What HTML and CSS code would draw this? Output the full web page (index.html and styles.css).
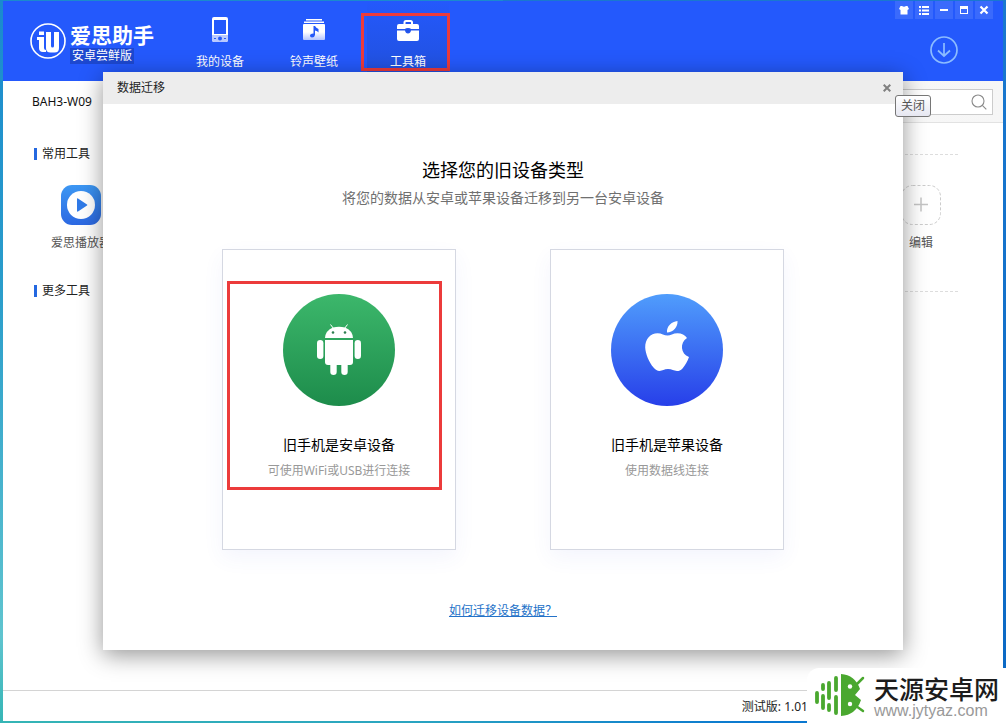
FILE: index.html
```html
<!DOCTYPE html>
<html lang="zh-CN">
<head>
<meta charset="utf-8">
<title>爱思助手 安卓尝鲜版</title>
<link rel="stylesheet" href="styles.css">
</head>
<body>
<div class="app">
  <header class="topbar">
    <div class="brand">
      <svg class="brand-mark" viewBox="0 0 36 36" aria-hidden="true">
        <circle cx="18" cy="18" r="17" fill="none" stroke="#fff" stroke-width="1.6"/>
        <path fill="#fff" d="M9 8.500h5v3.500H9zM7 14h7v11q0 2 2 2v2h-3q-4 0-4-4v-8H7zM16 9h5v14q0 1.500 1.500 1.500T24 23V9h5v16q0 4.500-4.500 4.500h-4Q16 29.500 16 25z"/>
      </svg>
      <div class="brand-text">
        <div class="brand-name">爱思助手</div>
        <div class="brand-edition">安卓尝鲜版</div>
      </div>
    </div>
    <nav class="nav">
      <a class="nav-item" href="#device">
        <svg class="nav-icon" viewBox="0 0 26 28" aria-hidden="true">
          <path fill="#fff" fill-rule="evenodd" d="M7 2h12q2 0 2 2v21q0 2-2 2H7q-2 0-2-2V4q0-2 2-2zm0 3v14h12V5z"/>
          <path fill="#b9c9ff" d="M5 20h16v5q0 2-2 2H7q-2 0-2-2z"/>
          <circle cx="13" cy="23.500" r="2" fill="#2459f8"/>
          <path stroke="#2459f8" d="M7 23.500h2M17 23.500h2"/>
        </svg>
        <span>我的设备</span>
      </a>
      <a class="nav-item" href="#media">
        <svg class="nav-icon" viewBox="0 0 26 28" aria-hidden="true">
          <defs><linearGradient id="album" x2="0" y2="1"><stop stop-color="#fff"/><stop offset=".5" stop-color="#fff"/><stop offset="1" stop-color="#b3c5ff"/></linearGradient></defs>
          <path stroke="#fff" stroke-width="1.400" d="M5 4.700h16M3 7.300h20"/>
          <rect x="2" y="9" width="22" height="16" rx="1" fill="url(#album)"/>
          <path fill="#2459f8" d="M12.500 11h1.500q1 2 3.500 3v3.500q-1-1.500-3.500-2V20q-.5 2.500-3 2.500-2 0-2-1.800 0-2 3.500-2.200z"/>
        </svg>
        <span>铃声壁纸</span>
      </a>
      <a class="nav-item nav-item-active" href="#toolbox">
        <svg class="nav-icon" viewBox="0 0 26 28" aria-hidden="true">
          <path fill="none" stroke="#fff" stroke-width="2" d="M9.500 10V7.500Q9.500 6 11 6h4.500q1.500 0 1.500 1.500V10"/>
          <path fill="#fff" d="M4 9h18q2 0 2 2v3h-8q-.5-1-3-1t-3 1H2v-3q0-2 2-2zM2 15.500h8q.5 3 3 3t3-3h8V24q0 2-2 2H4q-2 0-2-2z"/>
          <circle cx="13" cy="15.500" r="1.500" fill="#2153e6"/>
        </svg>
        <span>工具箱</span>
        <span class="mark mark-nav"></span>
      </a>
    </nav>
    <div class="top-actions">
      <div class="window-buttons">
        <button type="button" class="window-button" aria-label="皮肤"><svg viewBox="0 0 18 18"><path fill="#fff" d="M5.500 5H7q2 1.500 4 0h1.500L14 8l-1.500 1v4.500h-7V9L4 8z"/></svg></button>
        <button type="button" class="window-button" aria-label="菜单"><svg viewBox="0 0 18 18"><path stroke="#fff" stroke-width="2" d="M4 6h2M7 6h7M4 9.500h2M7 9.500h7M4 13h2M7 13h7"/></svg></button>
        <button type="button" class="window-button" aria-label="最小化"><svg viewBox="0 0 18 18"><path stroke="#fff" stroke-width="2" d="M5 9h8"/></svg></button>
        <button type="button" class="window-button" aria-label="最大化"><svg viewBox="0 0 18 18"><path fill="#fff" fill-rule="evenodd" d="M5 5h8v8H5zm1 3v4h6V8z"/></svg></button>
        <button type="button" class="window-button" aria-label="退出"><svg viewBox="0 0 18 18"><path stroke="#fff" stroke-width="2.200" d="M5.500 5.500l7 7M12.500 5.500l-7 7"/></svg></button>
      </div>
      <button type="button" class="download" aria-label="下载">
        <svg viewBox="0 0 28 28"><g fill="none" stroke="#8cbcff" stroke-width="1.700"><circle cx="14" cy="14" r="13"/><path d="M14 7v13M8 14.500l6 5.500 6-5.500"/></g></svg>
      </button>
    </div>
  </header>

  <div class="toolbar">
    <span class="device">BAH3-W09</span>
    <label class="search">
      <input type="text" class="search-input" aria-label="搜索">
      <svg class="search-icon" viewBox="0 0 16 16" aria-hidden="true"><g fill="none" stroke="#8a8a8a" stroke-width="1.100"><circle cx="7" cy="7" r="6"/><path d="M11.300 11.300l4 4"/></g></svg>
    </label>
  </div>

  <main class="tools">
    <h2 class="section-title">常用工具</h2>
    <div class="tool-row">
      <a class="tool" href="#player">
        <svg class="tool-icon" viewBox="0 0 40 40" aria-hidden="true">
          <defs><linearGradient id="player" x2="0" y2="1"><stop stop-color="#3c97f3"/><stop offset="1" stop-color="#2c68e2"/></linearGradient></defs>
          <rect width="40" height="40" rx="11" fill="url(#player)"/>
          <circle cx="20" cy="20" r="14" fill="#fff"/>
          <path fill="#2f7ae8" d="M17 13.500q-1-.5-1 .5v12q0 1 1 .5l9-6q.8-.5 0-1z"/>
        </svg>
        <span>爱思播放器</span>
      </a>
      <a class="tool" href="#edit">
        <svg class="tool-icon" viewBox="0 0 40 40" aria-hidden="true">
          <rect x=".5" y=".5" width="39" height="39" rx="11" fill="none" stroke="#ccc" stroke-dasharray="3 2"/>
          <path stroke="#c4c4c4" stroke-width="1.500" d="M20 12.500v14M13 19.500h14"/>
        </svg>
        <span>编辑</span>
      </a>
    </div>
    <h2 class="section-title">更多工具</h2>
  </main>

  <footer class="status">测试版: 1.01</footer>
</div>

<div class="overlay">
  <section class="dialog" role="dialog" aria-labelledby="dialog-name">
    <div class="dialog-head">
      <span id="dialog-name">数据迁移</span>
      <button type="button" class="dialog-close" aria-label="关闭" aria-describedby="close-tip">
        <svg viewBox="0 0 8 8"><path stroke="#808080" stroke-width="2" d="M.7.7l6.600 6.600M7.300.7L.7 7.300"/></svg>
      </button>
      <span class="tooltip" id="close-tip" role="tooltip">关闭</span>
    </div>
    <div class="dialog-body">
      <h1 class="dialog-title">选择您的旧设备类型</h1>
      <p class="dialog-sub">将您的数据从安卓或苹果设备迁移到另一台安卓设备</p>
      <div class="cards">
        <button type="button" class="card">
          <svg class="card-icon" viewBox="0 0 112 112" aria-hidden="true">
            <defs><linearGradient id="green" x2="0" y2="1"><stop stop-color="#3cb76b"/><stop offset="1" stop-color="#1d8c4b"/></linearGradient></defs>
            <circle cx="56" cy="56" r="56" fill="url(#green)"/>
            <g fill="#fff">
              <path d="M42 44q.5-7.500 8-10.500 6-1.500 12 0 7.500 3 8 10.500z"/>
              <path d="M42 46h28v22q0 3-3 3H45q-3 0-3-3z"/>
              <rect x="34" y="46" width="6.400" height="19" rx="3.200"/>
              <rect x="71.600" y="46" width="6.400" height="19" rx="3.200"/>
              <rect x="47.300" y="66" width="6.400" height="15" rx="3.200"/>
              <rect x="58.300" y="66" width="6.400" height="15" rx="3.200"/>
              <path stroke="#fff" d="M47.500 30.500l3 4M64.500 30.500l-3 4"/>
            </g>
            <circle cx="50" cy="38.500" r="1.300" fill="#2e7f50"/><circle cx="62" cy="38.500" r="1.300" fill="#2e7f50"/>
          </svg>
          <span class="card-title">旧手机是安卓设备</span>
          <span class="card-sub">可使用WiFi或USB进行连接</span>
          <span class="mark mark-card"></span>
        </button>
        <button type="button" class="card">
          <svg class="card-icon" viewBox="0 0 112 112" aria-hidden="true">
            <defs><linearGradient id="blue" x2="0" y2="1"><stop stop-color="#509dfc"/><stop offset="1" stop-color="#273fe9"/></linearGradient></defs>
            <circle cx="56" cy="56" r="56" fill="url(#blue)"/>
            <path fill="#fff" d="M66.500 27c.5 6-4.500 11.500-10.500 11.500C55.500 32.500 60.500 27.500 66.500 27zM56.500 41.500c3 0 5.500-2.300 10-2.300 4 0 7.500 1.800 9.500 4.800-7.500 4.500-6.500 16 2 19-1.500 4.500-4 8.500-6.500 11.500-1.800 2-3.500 2.500-5.500 2.500-3.300 0-5-1.900-9-1.900S51.500 77 48.500 77c-2.300 0-4-1-6-3.400C38 68 34.500 60 34.200 53.500 34 45 39.500 39.200 46.500 39.200c4 0 7 2.300 10 2.300z"/>
          </svg>
          <span class="card-title">旧手机是苹果设备</span>
          <span class="card-sub">使用数据线连接</span>
        </button>
      </div>
      <a class="help" href="#help">如何迁移设备数据？</a>
    </div>
  </section>
</div>

<div class="watermark">
  <svg class="watermark-logo" viewBox="0 0 52 44" aria-hidden="true">
    <g stroke="#4aa82f" stroke-width="3.800" stroke-linecap="round" fill="none">
      <path d="M3 20v9M9 12v4M9 23v12M15 10v15M15 32v5M22 5v12M22 24v16"/>
      <path stroke-width="2.500" d="M42 12l7-7M42 33l7 5"/>
    </g>
    <path fill="#4aa82f" d="M27 1q14 1 19 15l-5 6 6 5q-5 15-20 16z"/>
    <circle cx="36" cy="13.500" r="2.200" fill="#fff"/><circle cx="36" cy="31" r="2.200" fill="#fff"/>
  </svg>
  <div class="watermark-text">
    <div class="watermark-name">天源安卓网</div>
    <div class="watermark-url">www.jytyaz.com</div>
  </div>
</div>
</body>
</html>
```
FILE: styles.css
```css
* { box-sizing: border-box; }

body {
  margin: 0;
  min-height: 100vh;
  display: flex;
  padding: 1px 3px 2px;
  position: relative;
  overflow: hidden;
  font: 12px/16px "Noto Sans", "Noto Sans CJK SC", sans-serif;
  color: #222;
  background:
    linear-gradient(90deg, #35b5b5, #2aa5c0 40%, #0a78d0 75%) bottom / 100% 2px no-repeat,
    linear-gradient(#1a78cf, #0a68c4) right / 50% 100% no-repeat,
    linear-gradient(#1a8ace, #2a9dcb 40%, #5fc4cf 88%, #35b5b5) left / 50% 100% no-repeat;
}

a { color: inherit; text-decoration: none; }
h1, h2, p { margin: 0; font-weight: 400; }
svg { display: block; }
button { font: inherit; color: inherit; border: 0; padding: 0; background: none; }

.app {
  flex: 1;
  display: flex;
  flex-direction: column;
  background: #fff;
}

.topbar {
  display: flex;
  height: 80px;
  padding-right: 10px;
  background: #2459fc;
  color: #fff;
}

.brand {
  display: flex;
  gap: 4px;
  width: 170px;
  padding: 22px 0 0 27px;
}
.brand-mark { width: 36px; height: 36px; }
.brand-name {
  font-size: 21px;
  line-height: 25px;
  font-weight: 700;
  white-space: nowrap;
}
.brand-edition {
  display: inline-block;
  padding: 0 2px;
  background: #1d48d0;
}

.nav { display: flex; flex: 1; }
.nav-item {
  position: relative;
  display: flex;
  flex-direction: column;
  align-items: center;
  gap: 11px;
  width: 94px;
  padding-top: 14px;
}
.nav-icon { width: 26px; height: 28px; }
.nav-item-active {
  background: linear-gradient(#2459fc, #2150dc) center / 82px 100% no-repeat;
}

.mark {
  position: absolute;
  border: 3px solid #ec3b3b;
  pointer-events: none;
}
.mark-nav { left: 0; top: 12px; width: 89px; height: 58px; }
.mark-card { left: 4px; top: 31px; width: 215px; height: 209px; }

.top-actions {
  display: flex;
  flex-direction: column;
  align-items: center;
  gap: 17px;
}
.window-buttons { display: flex; gap: 2px; }
.window-button { width: 18px; height: 18px; background: #3a6afc; }
.download { width: 28px; height: 28px; }

.toolbar {
  display: flex;
  justify-content: space-between;
  align-items: center;
  height: 42px;
  padding: 0 10px 0 29px;
  background:
    linear-gradient(#e2e2e2, #e2e2e2) right bottom / 50% 1px no-repeat,
    linear-gradient(90deg, #fff 20%, #f6f6f6);
}
.device { color: #111; }
.search { position: relative; display: block; width: 200px; }
.search-input {
  display: block;
  width: 100%;
  height: 26px;
  padding: 0 28px 0 8px;
  border: 1px solid #ccc;
  background: #fff;
  font: inherit;
}
.search-icon { position: absolute; right: 6px; top: 5px; width: 16px; height: 16px; }

.tools { flex: 1; padding: 23px 45px 0 31px; }
.section-title {
  display: flex;
  align-items: center;
  gap: 5px;
  font-size: 12px;
}
.section-title::before { content: ""; width: 3px; height: 12px; background: #2468e0; }
.section-title::after {
  content: "";
  flex: 1;
  margin-left: 20px;
  border-top: 1px dashed #ddd;
}
.tool-row {
  display: flex;
  justify-content: space-between;
  padding: 23px 0 32px 10px;
}
.tool {
  display: flex;
  flex-direction: column;
  align-items: center;
  gap: 10px;
  width: 74px;
  color: #555;
}
.tool-icon { width: 40px; height: 40px; }

.status {
  height: 31px;
  padding: 8px 195px 0 0;
  border-top: 1px solid #d4d4d4;
  text-align: right;
}

/* Dialog */
.overlay {
  position: absolute;
  inset: 0;
  display: flex;
  justify-content: center;
  align-items: flex-start;
  padding-top: 72px;
}
.dialog {
  width: 800px;
  background: #fff;
  box-shadow: 0 5px 22px rgba(0, 0, 0, .42);
}
.dialog-head {
  position: relative;
  display: flex;
  align-items: center;
  justify-content: space-between;
  height: 32px;
  padding: 0 12px 0 14px;
  background: #ededed;
}
.dialog-close { width: 8px; height: 8px; }
.tooltip {
  position: absolute;
  right: -28px;
  top: 23px;
  padding: 2px 5px;
  border: 1px solid #767676;
  border-radius: 3px;
  background: linear-gradient(#fff, #e6e7f1);
  color: #555;
}
.dialog-body {
  display: flex;
  flex-direction: column;
  align-items: center;
  padding: 54px 0 31px;
}
.dialog-title { font-size: 18px; line-height: 24px; color: #000; }
.dialog-sub { margin-top: 6px; font-size: 14px; line-height: 20px; color: #707070; }
.cards { display: flex; gap: 94px; margin: 41px 0 53px; }
.card {
  position: relative;
  display: flex;
  flex-direction: column;
  align-items: center;
  width: 234px;
  height: 301px;
  padding-top: 44px;
  border: 1px solid #d5d8e2;
  background: #fff;
  box-shadow: 0 8px 20px rgba(60, 80, 220, .06);
}
.card-icon { width: 112px; height: 112px; }
.card-title { margin-top: 29px; font-size: 14px; line-height: 20px; color: #000; }
.card-sub { margin-top: 8px; color: #999; }
.help { color: #2472c8; text-decoration: underline; }

/* Corner site badge */
.watermark {
  position: absolute;
  right: 0;
  bottom: 0;
  display: flex;
  gap: 8px;
  padding: 5px 7px 4px 7px;
  background: #fff;
  border-top-left-radius: 12px;
}
.watermark-logo { width: 52px; height: 44px; }
.watermark-name { font: 500 25px/30px "Noto Sans CJK SC", sans-serif; color: #1c1c1c; }
.watermark-url { font: 16px/16px "Liberation Sans", sans-serif; color: #999; }
```
